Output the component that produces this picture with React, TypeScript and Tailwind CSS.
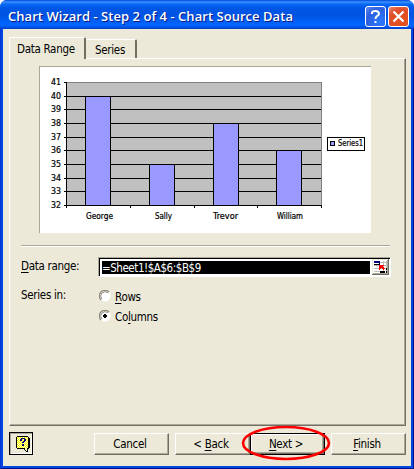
import React from "react";

const grid = [96, 109, 123, 137, 150, 164, 178, 191];
const levels = [82, 96, 109, 123, 137, 150, 164, 178, 191, 205];
const bars = [
  { name: "George", x: 85, y: 96, tx: 86, w: 27 },
  { name: "Sally", x: 149, y: 164, tx: 155, w: 17 },
  { name: "Trevor", x: 213, y: 123, tx: 213, w: 25 },
  { name: "William", x: 276, y: 150, tx: 277, w: 26 },
];

function Chart() {
  return (
    <svg width="331" height="166" viewBox="40 67 331 166" className="block tracking-[0px]" fontFamily="'DejaVu Sans', sans-serif" fontSize="8" shapeRendering="crispEdges">
      <rect x="66" y="82" width="256" height="124" fill="#c0c0c0" />
      {grid.map((y) => <rect key={y} x="66" y={y} width="255" height="1" />)}
      <path d="M66 82.5H321.5V205" fill="none" stroke="#808080" />
      {bars.map((b) => (
        <g key={b.name}>
          <rect x={b.x + 0.5} y={b.y + 0.5} width="25" height={205 - b.y} fill="#9999ff" stroke="#000" />
          <text x={b.tx} y="219" textLength={b.w} lengthAdjust="spacingAndGlyphs" stroke="#000" strokeWidth=".2">{b.name}</text>
        </g>
      ))}
      <path d="M66.5 82V208M66 205.5H322M130.5 205V208M194.5 205V208M257.5 205V208M321.5 205V208" stroke="#000" fill="none" />
      {levels.map((y, i) => (
        <g key={y}>
          <rect x="64" y={y} width="3" height="1" />
          <text x="51" y={y + 3} textLength="10" lengthAdjust="spacingAndGlyphs" stroke="#000" strokeWidth=".2">{41 - i}</text>
        </g>
      ))}
      <rect x="327.5" y="137.5" width="37" height="13" fill="#fff" stroke="#000" />
      <rect x="330.5" y="141.5" width="4" height="4" fill="#9999ff" stroke="#000" />
      <text x="338" y="146" textLength="25" lengthAdjust="spacingAndGlyphs" stroke="#000" strokeWidth=".2">Series1</text>
    </svg>
  );
}

function RangePicker() {
  return (
    <svg width="17" height="16" viewBox="0 0 17 16" shapeRendering="crispEdges" className="block">
      <path fill="#ece9d8" d="M0 0h17v16H0z" />
      <path fill="#fff" d="M1 1h14v13H1z" />
      <path fill="#c0c0c0" d="M2 6h12v1H2zM2 9h12v1H2zM2 12h6v1H2zM8 3h6v1H8zM11 2h1v11h-1zM14 2h1v12h-1z" />
      <path fill="#000080" d="M2 2h6v2H2z" />
      <path d="M2 5h6v1H2zM8 12h5v2H8zM14 9h1v2h-1zM14 12h1v2h-1zM7 4h1v2h-1z" />
      <path fill="#f00" d="M7 6h5v1h-1v1h1v1h1v1h-1v1h-1v-1h-1V9H9v1H8v1H7z" />
      <path fill="#716f64" d="M16 0h1v16H0v-1h16z" />
      <path fill="#aca899" d="M15 1h1v14H1v-1h14z" />
    </svg>
  );
}

function Radio({ on }: { on?: boolean }) {
  return (
    <svg width="12" height="12" viewBox="0 0 12 12" className="block shrink-0">
      <circle cx="6" cy="6" r="5.6" fill="#fff" />
      <path d="M2 10A5.4 5.4 0 0 1 10 2" fill="none" stroke="#8a877a" strokeWidth="1.1" />
      <path d="M2.8 9A4.4 4.4 0 0 1 9 2.8" fill="none" stroke="#716f64" strokeWidth=".8" />
      {on && <path d="M5 4h2v1h1v2H7v1H5V7H4V5h1z" shapeRendering="crispEdges" />}
    </svg>
  );
}

function HelpBubble() {
  return (
    <svg width="14" height="16" viewBox="0 0 14 16" shapeRendering="crispEdges" className="block">
      <path fill="#000" d="M1 0h11v1h1v1h1v10h-1v1h-1v3h-2v-1H9v-1H8v-1H1v-1H0V1h1z" />
      <path fill="#ffffb0" d="M1 1h11v11h-1v3h-1v-1H9v-2H1z" />
      <path d="M2 1.5h9M2 3.5h10M2 5.5h10M2 7.5h10M2 9.5h10M2 11.5h9M1 2.5h11M1 4.5h11M1 6.5h11M1 8.5h11M1 10.5h11" fill="none" stroke="#ffff00" strokeDasharray="1 1" />
      <path fill="#000080" d="M5 2h4v1h1v2H9v1H8v1H6V6h1V5h1V3H6v2H4V3h1zM6 8h2v2H6z" />
    </svg>
  );
}

function Button({ children, focus }: { children: React.ReactNode; focus?: boolean }) {
  return (
    <button className={`flex h-[22px] w-[75px] items-center justify-center border bg-[#ece9d8] pt-px pr-[3px] leading-none ${focus ? "border-black shadow-[inset_1px_1px_#fff,inset_-1px_-1px_#716f64,inset_-2px_-2px_#aca899]" : "border-t-white border-l-white border-r-[#716f64] border-b-[#716f64] shadow-[inset_-1px_-1px_#aca899]"}`}>
      <span>{children}</span>
    </button>
  );
}

const U = ({ children }: { children: React.ReactNode }) => <span className="underline decoration-1 underline-offset-2">{children}</span>;

export default function App() {
  return (
    <div className="h-[469px] w-[414px] bg-white">
      <div className="relative flex h-full flex-col overflow-hidden rounded-t-[7px] bg-[#0048df] font-['DejaVu_Sans_Condensed','DejaVu_Sans',sans-serif] text-[11.5px] tracking-[-0.3px] text-black [font-stretch:condensed]">
        <header className="flex h-[29px] shrink-0 items-center justify-between bg-[linear-gradient(180deg,#0048d8_0%,#3a91ff_7%,#0868f4_14%,#0056e5_28%,#0054e3_55%,#0062fa_78%,#0064ff_88%,#0040c8_100%)] pr-[5px] pl-[8px]">
          <h1 className="mt-[4px] w-[300px] font-['Open_Sans','Noto_Sans',sans-serif] text-[13px] font-semibold tracking-[0.04px] whitespace-nowrap text-white [font-stretch:normal] [text-shadow:1px_1px_#0a1883]">Chart Wizard - Step 2 of 4 - Chart Source Data</h1>
          <div className="mt-[3px] flex gap-[2px]">
            <div className="flex size-[21px] items-center justify-center rounded-[3px] border border-white bg-[radial-gradient(circle_at_75%_80%,#2878ff,#2e60e0_65%,#6687ed)]">
              <svg width="19" height="19" viewBox="0 0 19 19"><path d="M6 7V5.5Q6.5 4 9.5 4T13 6.5Q13 8 11 9.2Q9.5 10 9.5 12M9.5 14v2" fill="none" stroke="white" strokeWidth="2" /></svg>
            </div>
            <div className="flex size-[21px] items-center justify-center rounded-[3px] border border-white bg-[radial-gradient(circle_at_70%_80%,#e4511e,#df4f2a_65%,#ee8871)]">
              <svg width="19" height="19" viewBox="0 0 19 19"><path d="M4.5 4.5l10 10M14.5 4.5l-10 10" stroke="white" strokeWidth="2.2" /></svg>
            </div>
          </div>
        </header>
        <main className="mx-[3px] mb-[3px] flex min-h-0 flex-1 flex-col bg-[#ece9d8] pt-[8px] pr-[5px] pl-[6px]">
          <div className="z-10 -mb-px flex h-[22px] shrink-0 items-end">
            <div className="flex h-[22px] w-[77px] items-center rounded-t-[2px] border-t border-r-2 border-l border-t-white border-r-[#716f64] border-l-white bg-[#ece9d8] pt-[2px] pl-[7px] whitespace-nowrap">Data Range</div>
            <div className="mb-px flex h-[19px] w-[51px] items-center rounded-t-[2px] border-t border-r-2 border-t-white border-r-[#716f64] pt-[3px] pl-[9px]">Series</div>
          </div>
          <section className="flex h-[368px] shrink-0 flex-col border border-t-white border-r-[#716f64] border-b-[#716f64] border-l-white pl-[11px] shadow-[inset_-1px_-1px_#aca899]">
            <div className="mt-[7px] ml-[18px] h-[167px] w-[332px] border-t border-l border-[#aca899] bg-white"><Chart /></div>
            <div className="mt-[12px] h-[2px] w-[369px] border-t border-b border-t-[#aca899] border-b-white" />
            <div className="mt-[10px] flex h-[20px]">
              <label className="w-[77px] pt-[2px] leading-[15px]"><U>D</U>ata range:</label>
              <div className="flex h-[20px] w-[293px] justify-between border border-t-[#aca899] border-r-white border-b-white border-l-[#aca899] bg-white pr-px shadow-[inset_1px_1px_#000]">
                <div className="mt-[3px] ml-[3px] h-[13px] w-[268px] bg-black leading-[14px] tracking-[-0.45px] text-white">=Sheet1!$A$6:$B$9</div>
                <div className="mt-px"><RangePicker /></div>
              </div>
            </div>
            <div className="mt-[10px] flex">
              <label className="w-[78px] pt-px leading-[15px]">Series in:</label>
              <div className="mt-[3px] flex flex-col gap-[8px]">
                <div className="flex h-[12px] items-center gap-[4px] leading-[14px]"><Radio /><span className="mt-px"><U>R</U>ows</span></div>
                <div className="flex h-[12px] items-center gap-[4px] leading-[14px]"><Radio on /><span className="mt-px">Co<U>l</U>umns</span></div>
              </div>
            </div>
          </section>
          <footer className="mt-[6px] flex h-[24px] items-start">
            <div className="h-[23px] w-[24px] border border-black pt-[3px] pl-[6px] shadow-[inset_1px_1px_#aca899,inset_-1px_-1px_#fff]"><HelpBubble /></div>
            <div className="mt-px ml-[61px] flex">
              <Button>Cancel</Button>
              <div className="ml-[6px]"><Button>&lt; <U>B</U>ack</Button></div>
              <Button focus><U>N</U>ext &gt;</Button>
              <div className="ml-[6px]"><Button><U>F</U>inish</Button></div>
            </div>
          </footer>
        </main>
        <div className="pointer-events-none absolute inset-x-0 top-[29px] bottom-0 border-x border-b border-l-[#0831d9] border-r-[#00138c] border-b-[#00138c]" />
        <svg className="pointer-events-none absolute top-[423px] left-[240px]" width="92" height="40"><ellipse cx="46" cy="20" rx="43" ry="16" fill="none" stroke="#f00" strokeWidth="2.6" /></svg>
      </div>
    </div>
  );
}
